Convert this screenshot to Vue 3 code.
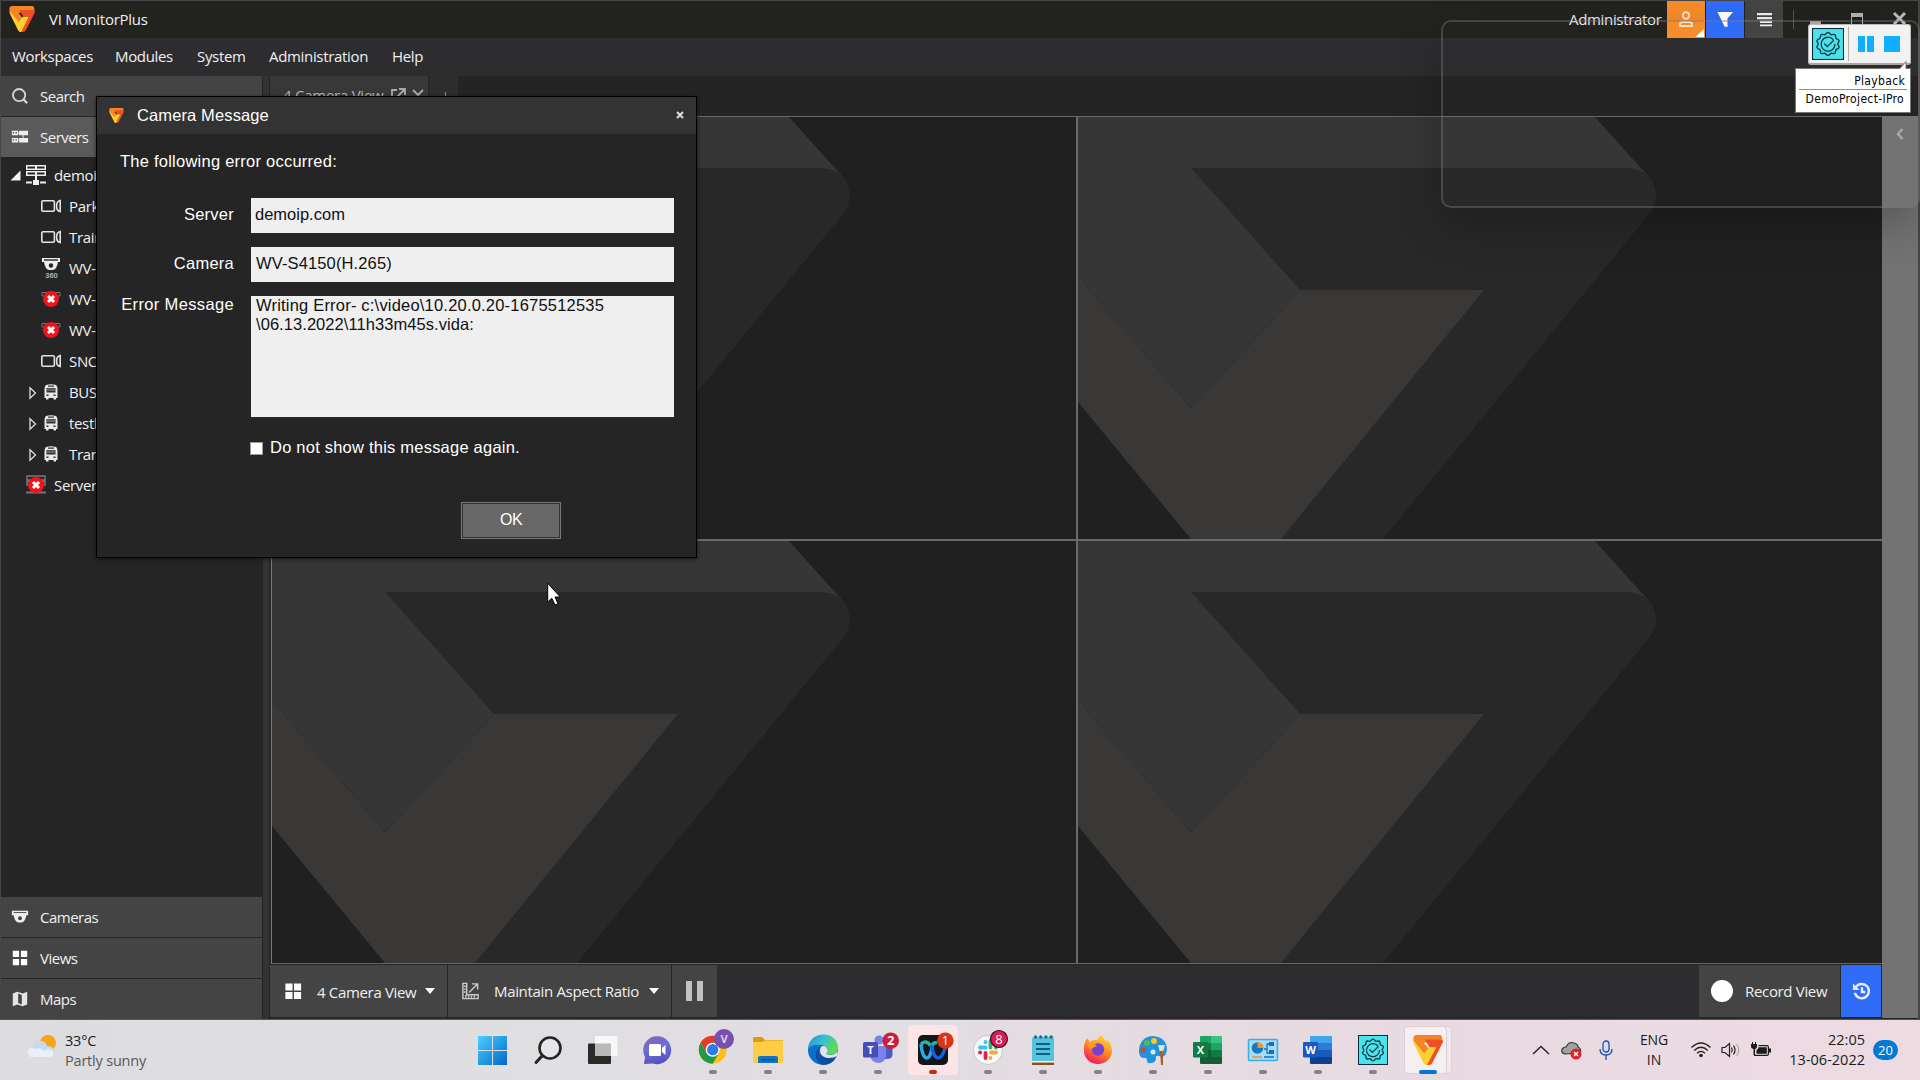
<script setup>
import { h } from 'vue'

const menu = ['Workspaces', 'Modules', 'System', 'Administration', 'Help']

const tree = [
  { icon: 'cam', label: 'Park' },
  { icon: 'cam', label: 'Train' },
  { icon: 'dome360', label: 'WV-' },
  { icon: 'fail', label: 'WV-' },
  { icon: 'fail', label: 'WV-' },
  { icon: 'cam', label: 'SNC' },
  { icon: 'bus', label: 'BUS', open: true },
  { icon: 'bus', label: 'testb', open: true },
  { icon: 'bus', label: 'Tran', open: true },
]

const sections = ['Cameras', 'Views', 'Maps']

const apps = [
  'windows', 'search', 'taskview', 'chat', 'chrome', 'explorer', 'edge', 'teams', 'webex',
  'slack', 'notepad', 'firefox', 'paint', 'excel', 'control', 'word', 'seal', 'vi',
]
const running = (i) => i > 3 && i < 17 && i !== 8

function ring(cx, cy, r, amp, lobes) {
  const pts = []
  for (let i = 0; i < 144; i++) {
    const a = (i / 144) * Math.PI * 2
    const rr = r + amp * Math.cos(lobes * a)
    pts.push(`${(cx + rr * Math.sin(a)).toFixed(2)} ${(cy - rr * Math.cos(a)).toFixed(2)}`)
  }
  return 'M' + pts.join('L') + 'Z'
}

const Logo = () =>
  h('svg', { viewBox: '0 0 30 30' }, [
    h('path', { fill: '#f58426', d: 'M3 0H27Q29 0 29.500 4.500L11 8L16 14L11 21L1 7Q-1 1 3 0Z' }),
    h('path', { fill: '#f04e23', d: 'M12 4.500H28Q31 4.500 29.500 8L19 28.500Q18 30 15 30H13.500L23 12.500H16.500Z' }),
    h('path', { fill: '#fdd02f', d: 'M.500 5.500L11 18.500L16 12.500H23L14 30H13Q11.500 30 10.500 28L1 9Z' }),
  ])

const Seal = () =>
  h('svg', { viewBox: '0 0 30 30' }, [
    h('path', { fill: '#0d2b3e', d: 'M0 0H30V30H0Z' }),
    h('path', { fill: '#4be3ea', d: 'M1 1H29V29H1Z' }),
    h('path', { fill: 'none', stroke: '#123a4c', 'stroke-width': 1.3, d: ring(15, 15, 10, 0.8, 10) }),
    h('path', { fill: 'none', stroke: '#123a4c', 'stroke-width': 1.2, d: 'M20 11A6.500 6.500 0 1 0 21.500 15M11.500 14.500L14.300 17.500L20.500 11.500' }),
  ])
</script>

<template>
  <div class="screen">
    <div class="window">
      <header class="titlebar">
        <Logo class="app-logo" />
        <span class="app-name">VI MonitorPlus</span>
        <span class="admin">Administrator</span>
        <div class="tbtn orange">
          <svg viewBox="0 0 38 37"><g fill="none" stroke="#fde0c4" stroke-width="2"><circle cx="19" cy="14.500" r="3.200" /><path d="M13 25V23Q13 21 16 21H22Q25 21 25 23V25Z" /></g><path fill="#fff" d="M37 28V36H28.500Z" /></svg>
        </div>
        <div class="tbtn blue">
          <svg viewBox="0 0 38 37"><path fill="#fff" d="M11.500 11H27L21.500 17.500V26L18.500 25.500Z" /></svg>
        </div>
        <div class="tbtn grey">
          <svg viewBox="0 0 38 37"><path fill="#f0f0f0" d="M12 12H27V14.300H12ZM12 16H27V18.300H12ZM15 19.800H27V22H15ZM15 23.500H27V25.300H15Z" /></svg>
        </div>
        <svg class="wincontrols" viewBox="0 0 136 37"><path fill="#555" d="M9 9H10V28H9Z" /><path fill="#a8a8a8" d="M26 20H37V23H26Z" /><path fill="none" stroke="#b4b4b4" d="M67.500 13.500H78.500V24H67.500Z" /><path fill="#b4b4b4" d="M67 12H79V16H67Z" /><path stroke="#bcbcbc" stroke-width="3" d="M110 12L121 23M121 12L110 23" /></svg>
      </header>

      <nav class="menubar">
        <span v-for="m in menu" :key="m">{{ m }}</span>
      </nav>

      <div class="body">
        <aside class="sidebar">
          <div class="srow">
            <svg viewBox="0 0 20 20"><circle cx="9" cy="9" r="6.800" fill="none" stroke="#d4d4d4" stroke-width="2" /><path stroke="#d4d4d4" stroke-width="2.500" d="M13.500 13.500L18 18" /></svg>
            <span>Search</span>
          </div>
          <div class="srow active">
            <svg viewBox="0 0 20 20"><path fill="#eee" d="M1 3H8V8H1ZM9 3H19V8H9ZM1 11H8V16H1ZM9 11H19V16H9ZM8 5H9V6H8ZM8 13H9V14H8ZM13 8H14V11H13Z" /><path fill="#555" d="M2 4.500H3.500V6H2ZM5 4.500H6.500V6H5ZM2 12.500H3.500V14H2ZM5 12.500H6.500V14H5Z" /></svg>
            <span>Servers</span>
          </div>
          <div class="tree">
            <div class="trow root">
              <svg class="twist" viewBox="0 0 11 11"><path fill="#f2f2f2" d="M10.500 .5V10.500H.5Z" /></svg>
              <svg class="ticon" viewBox="0 0 20 20"><path fill="#eee" d="M0 0H20V5H0ZM0 6H20V11H0ZM9 11H11V15H9ZM0 16.500H20V18.500H0ZM7 15H13V20H7Z" /><path fill="#252525" d="M1.500 1.500H9V3.500H1.500ZM11 1.500H18.500V3.500H11ZM1.500 7.500H9V9.500H1.500ZM11 7.500H18.500V9.500H11ZM6 16H7V19H6ZM13 16H14V19H13Z" /></svg>
              <span>demoi</span>
            </div>
            <div v-for="(t, i) in tree" :key="i" class="trow">
              <svg class="twist" viewBox="0 0 11 14"><path v-if="t.open" fill="none" stroke="#ddd" stroke-width="1.300" d="M4 1.700L9.500 7L4 12.300Z" /></svg>
              <svg v-if="t.icon === 'cam'" class="ticon" viewBox="0 0 20 20"><g fill="none" stroke="#e4e4e4" stroke-width="1.600"><rect x=".8" y="4.700" width="12.600" height="10.600" rx="1.200" /><path d="M19.200 4.500V15.500C16 15 15.600 13 15.600 10S16 5 19.200 4.500Z" /></g></svg>
              <svg v-else-if="t.icon === 'dome360'" class="ticon" viewBox="0 0 20 20"><path fill="#eee" d="M1 0H19V4H17Q16 11 12 12H8Q4 11 3 4H1Z" /><path fill="#252525" d="M3 1.300H17V2.700H3Z" /><circle cx="10" cy="7.500" r="2.200" fill="#252525" /><text x="10.500" y="19.800" class="t360">360</text></svg>
              <svg v-else-if="t.icon === 'fail'" class="ticon" viewBox="0 0 20 20"><path fill="none" stroke="#777" d="M1 3.500H19V7H1Z" /><circle cx="10" cy="10" r="8" fill="#f5121c" /><path stroke="#fff" stroke-width="3" d="M7 7L13 13M13 7L7 13" /></svg>
              <svg v-else class="ticon" viewBox="0 0 20 20"><path fill="#e8e8e8" d="M5 3Q10 1.500 15 3Q16.500 4 16.500 8V16H15V17.500H12.500V16H7.500V17.500H5V16H3.500V8Q3.500 4 5 3Z" /><path fill="#333" d="M7 3.600H13V4.700H7ZM5.500 6H14.500V10.500H5.500ZM5.500 12.500H7.500V14H5.500ZM12.500 12.500H14.500V14H12.500Z" /><path fill="#666" d="M6 6.500H14V9H6Z" /></svg>
              <span>{{ t.label }}</span>
            </div>
            <div class="trow root">
              <i class="twist"></i>
              <svg class="ticon" viewBox="0 0 20 20"><path fill="none" stroke="#777" stroke-width="1.500" d="M1 1H19V5H1ZM1 6.500H19V10H1Z" /><path fill="#777" d="M0 16.500H20V18.500H0Z" /><circle cx="10" cy="10" r="8" fill="#f5121c" /><path stroke="#fff" stroke-width="3" d="M7 7L13 13M13 7L7 13" /></svg>
              <span>Server</span>
            </div>
          </div>
          <div v-for="s in sections" :key="s" class="srow low">
            <svg v-if="s === 'Cameras'" viewBox="0 0 20 20"><path fill="#eee" d="M1 3H19V8H17Q16 15 12 16H8Q4 15 3 8H1Z" /><path fill="#444" d="M3 4.500H17V5.500H3Z" /><circle cx="10" cy="11.500" r="2.200" fill="#444" /></svg>
            <svg v-else-if="s === 'Views'" viewBox="0 0 20 20"><path fill="#fff" d="M2 2H9V9H2ZM11 2H18V9H11ZM2 11H9V18H2ZM11 11H18V18H11Z" /></svg>
            <svg v-else viewBox="0 0 20 20"><path fill="#e4e4e4" d="M2 4L7 2L13 4L18 2V16L13 18L7 16L2 18Z" /><path fill="#444" d="M8 4L12 5.500V16L8 14.500Z" /></svg>
            <span>{{ s }}</span>
          </div>
        </aside>
        <div class="splitter"></div>

        <main class="main">
          <div class="tabs">
            <div class="tab">
              <span>4 Camera View</span>
              <svg viewBox="0 0 34 16"><path fill="none" stroke="#aaa" stroke-width="1.800" d="M6 2H1V15H13V10M8 1H14V7M14 1L6 9M22 2L32 12M32 2L22 12" /></svg>
            </div>
            <div class="tab add"><svg viewBox="0 0 9 9"><path stroke="#c98b4a" d="M4.500 0V9M0 4.500H9" /></svg></div>
          </div>
          <div class="work">
            <div class="stage">
              <div class="cams">
                <svg v-for="n in 4" :key="n" class="cam" viewBox="0 0 804 422" preserveAspectRatio="xMinYMin slice">
                  <path fill="#363636" d="M0 0H517L571 60L545 90L222 173L113 291L0 159Z" />
                  <path fill="#282828" d="M113 51H545C556 51 563 53 569 58C576 64 578 73 578 79Q578 88 572 96L305 422H203L406 173H222Z" />
                  <path fill="#3a3836" d="M0 159L113 291L222 173H406L203 422H113L0 285Z" />
                </svg>
              </div>
              <footer class="toolbar">
                <div class="tool t1">
                  <svg viewBox="0 0 20 20"><path fill="#fff" d="M1.500 2H9V9.500H1.500ZM10.500 2H18V9.500H10.500ZM1.500 11H9V18.500H1.500ZM10.500 11H18V18.500H10.500Z" /></svg>
                  <span>4 Camera View</span><i class="caret"></i>
                </div>
                <div class="tool t2">
                  <svg viewBox="0 0 20 20"><g fill="none" stroke="#ccc" stroke-width="1.500"><path d="M2 2H6V14H18V18H2Z" /><path d="M8.500 11.500L17 3M11.500 2.500H17.500V8.500M3 5H5M3 8H5M3 11H5M5 14V17M8 15V17M11 15V17M14 15V17" /></g></svg>
                  <span>Maintain Aspect Ratio</span><i class="caret"></i>
                </div>
                <div class="tool t3"><i></i><i></i></div>
                <div class="tool rec"><i></i><span>Record View</span></div>
                <div class="tool hist">
                  <svg viewBox="0 0 20 20"><path fill="none" stroke="#e8eeff" stroke-width="2.500" d="M4 6A7.500 7.500 0 1 1 3 12M10.500 6V11H14" /><path fill="#e8eeff" d="M1 2V9H8Z" /></svg>
                </div>
              </footer>
            </div>
            <div class="rail"><svg viewBox="0 0 8 12"><path fill="none" stroke="#a8a8a8" stroke-width="2.500" d="M6.500 1L2 6L6.500 11" /></svg></div>
          </div>
        </main>
      </div>
    </div>

    <div class="ghost"></div>

    <div class="recorder">
      <Seal class="rseal" />
      <i class="rsep"></i>
      <i class="rbar"></i><i class="rbar"></i>
      <i class="rstop"></i>
    </div>
    <div class="tip">
      <svg class="tail" viewBox="0 0 8 9"><path fill="#fff" d="M7 1V9H0Z" /><path fill="none" stroke="#777" d="M0 8L7 .500V8" /></svg>
      <div class="tip1">Playback</div>
      <div class="tip2">DemoProject-IPro</div>
    </div>

    <section class="dialog">
      <div class="dhead">
        <Logo class="dlogo" />
        <span>Camera Message</span>
        <svg class="dclose" viewBox="0 0 8 8"><path stroke="#ddd" stroke-width="2" d="M1 1L7 7M7 1L1 7" /></svg>
      </div>
      <p class="lead">The following error occurred:</p>
      <div class="field"><label>Server</label><div class="input in1">demoip.com</div></div>
      <div class="field f2"><label>Camera</label><div class="input">WV-S4150(H.265)</div></div>
      <div class="field f3"><label>Error Message</label><div class="input area"><div class="l1">Writing Error- c:\video\10.20.0.20-1675512535</div><div>\06.13.2022\11h33m45s.vida:</div></div></div>
      <div class="check"><i></i><span>Do not show this message again.</span></div>
      <div class="ok"><span>OK</span></div>
    </section>

    <svg class="cursor" viewBox="0 0 14 24"><path fill="#fff" stroke="#000" d="M.7 1.200V20L4.800 16.200L8 23L11 21.700L8 15H13.300Z" /></svg>

    <div class="taskbar">
      <div class="weather">
        <svg viewBox="0 0 32 32"><circle cx="21" cy="12" r="8" fill="#fba40f" /><path fill="#c4d9f2" d="M6 26A6 6 0 0 1 6 15Q8 9 14 10Q19 10 20 15Q28 15 28 21Q28 26 23 26Z" /><path fill="#e6effa" d="M4 26Q-1 23 1 19Q4 15 8 18Q13 15 17 20Q22 16 26 20Q29 26 22 26Z" /></svg>
        <div><div class="deg">33°C</div><div class="sky">Partly sunny</div></div>
      </div>
      <div class="apps">
        <div v-for="(a, i) in apps" :key="a" class="app" :class="a">
          <svg v-if="a === 'windows'" viewBox="0 0 55 60"><defs><linearGradient id="wg" x1="0" y1="0" x2="1" y2="1"><stop offset="0" stop-color="#4cd0ff" /><stop offset="1" stop-color="#0067cb" /></linearGradient></defs><path fill="url(#wg)" d="M13 16H27V30H13ZM28 16H42V30H28ZM13 31H27V45H13ZM28 31H42V45H28Z" /></svg>
          <svg v-else-if="a === 'search'" viewBox="0 0 55 60"><circle cx="30" cy="28" r="10.500" fill="#e6e6e8" stroke="#242424" stroke-width="2.600" /><path stroke="#242424" stroke-width="3" stroke-linecap="round" d="M22 36L16 42.500" /></svg>
          <svg v-else-if="a === 'taskview'" viewBox="0 0 55 60"><rect x="13" y="23.500" width="23" height="20.500" rx="1" fill="#2a2a28" /><rect x="20" y="16" width="22.500" height="20" rx="1" fill="#fafafa" opacity=".92" /><path fill="#b9b9b9" d="M20 23.500H36V36H20Z" /></svg>
          <svg v-else-if="a === 'chat'" viewBox="0 0 55 60"><defs><linearGradient id="cg" x1="0" y1="0" x2=".3" y2="1"><stop offset="0" stop-color="#8a5fb5" /><stop offset=".5" stop-color="#6d6fd2" /><stop offset="1" stop-color="#5653c4" /></linearGradient></defs><path fill="url(#cg)" d="M14 44L15 37A14 14 0 1 1 23 43.500Z" /><rect x="19" y="24" width="12" height="12" rx="1.500" fill="#fff" /><path fill="#fff" d="M32 28L35.500 25V35L32 32Z" /></svg>
          <svg v-else-if="a === 'chrome'" viewBox="0 0 55 60"><circle cx="27.700" cy="29.700" r="14" fill="#fcc018" /><path fill="#e33b2e" d="M15.600 22.700A14 14 0 0 1 39.800 22.700H27.700L21.600 33.200Z" /><path fill="#1f9a49" d="M15.600 22.700A14 14 0 0 0 27.700 43.700L33.800 33.200L21.600 33.200Z" /><circle cx="27.700" cy="29.700" r="7" fill="#fff" /><circle cx="27.700" cy="29.700" r="5.600" fill="#2b7de9" /><circle cx="39" cy="19" r="10" fill="#7750b0" /><text x="39" y="23" class="b" fill="#ddd0ee" font-size="11">V</text></svg>
          <svg v-else-if="a === 'explorer'" viewBox="0 0 55 60"><path fill="#dd9b0b" d="M13 18Q13 17 14 17H22L25 20H43V30H13Z" /><path fill="#ffcd45" d="M13 22H22L25 20.500H43V43H13Z" /><path fill="#1374c5" d="M18 43V38Q18 36 20 36H36Q38 36 38 38V43Z" /><path fill="#0b4d8f" d="M21 39H35V40.500H21Z" /></svg>
          <svg v-else-if="a === 'edge'" viewBox="0 0 55 60"><defs><linearGradient id="eg" x1="0" y1="0" x2="1" y2=".5"><stop offset="0" stop-color="#1a8fd8" /><stop offset=".5" stop-color="#35bfd6" /><stop offset="1" stop-color="#62dc4c" /></linearGradient></defs><circle cx="28" cy="30" r="15" fill="#0f6fc8" /><path fill="url(#eg)" d="M13 29C14 10 42 10 43 27C43 34 37 36 31 34C34 30 31 25 26 25C20 24 16 25 13 29Z" /><path fill="#0c4f9e" d="M25 27C21 34 27 41 41 37Q37 45 28 45C19 42 19 30 25 27Z" /><path fill="#e6e2ea" d="M26 27C23 32 27 38 34 38Q39 38 42 36L43 31Q38 37 31 34Q34 31 31 27Q28 25 26 27Z" /></svg>
          <svg v-else-if="a === 'teams'" viewBox="0 0 55 60"><circle cx="29" cy="20" r="4.500" fill="#7b83eb" /><path fill="#5059c9" d="M34 26H42.500V35Q42 39 37 39H34Z" /><path fill="#7b83eb" d="M20 26H36V36Q35 43 28.500 43T20 36Z" /><rect x="13" y="22" width="15" height="15.500" rx="1.500" fill="#464eb8" /><text x="20.500" y="34" class="b" font-size="11">T</text><circle cx="40.700" cy="20.700" r="8.300" fill="#cb1d3c" /><text x="40.700" y="25.200" class="b" font-size="13">2</text></svg>
          <svg v-else-if="a === 'webex'" viewBox="0 0 55 60"><rect x="3" y="5" width="50" height="50" rx="4" fill="#fce4e7" /><rect x="13" y="15" width="30" height="30" rx="5" fill="#141516" /><path fill="none" stroke="#2ba7e8" stroke-width="3.500" d="M16 24C17 34 19 38 22 38S27 30 27 26" /><path fill="none" stroke="#22b3a1" stroke-width="3.500" d="M27 26Q28 22 32 23M16 24Q21 19 26 26" /><path fill="none" stroke="#155fe8" stroke-width="3.500" d="M26 25C28 34 30 38 33 38S39 33 40 28" /><circle cx="40.300" cy="20.700" r="8.300" fill="#d2371c" /><text x="40.300" y="25" class="n" font-size="12.500">1</text></svg>
          <svg v-else-if="a === 'slack'" viewBox="0 0 55 60"><circle cx="28" cy="30" r="14.500" fill="#f8f8f8" stroke="#c8c6c8" /><g stroke-width="3.800" stroke-linecap="round"><path stroke="#36c5f0" d="M25.500 22V22.200M20 27.500H25.500" /><path stroke="#2eb67d" d="M30.500 21V27.500M36 27.500H35.800" /><path stroke="#ecb22e" d="M31 32.500H36M30.500 38V37.800" /><path stroke="#e01e5a" d="M25.500 33V38M20 32.500H20.200" /></g><circle cx="39" cy="19" r="8.500" fill="#dd1a51" stroke="#39101f" stroke-width="1.200" /><text x="39" y="23.600" class="n" font-size="13">8</text></svg>
          <svg v-else-if="a === 'notepad'" viewBox="0 0 55 60"><path fill="#8b5118" d="M17 42H39V45H17Z" /><path fill="#fff" d="M17 40H39V42.500H17Z" /><path fill="#56c3dc" d="M17 19Q17 17 19 17H37Q39 17 39 19V41H17Z" /><path fill="none" stroke="#0c5f80" stroke-width="1.800" d="M21 24H35M21 29H35M21 34H35" /><path fill="none" stroke="#14708e" stroke-width="3.400" stroke-linecap="round" stroke-dasharray="0 5.200" d="M20.500 17H37" /></svg>
          <svg v-else-if="a === 'firefox'" viewBox="0 0 55 60"><defs><linearGradient id="fg" x1=".8" y1="0" x2=".3" y2="1"><stop offset="0" stop-color="#ffe040" /><stop offset=".5" stop-color="#ff8a26" /><stop offset="1" stop-color="#f0145c" /></linearGradient></defs><path fill="url(#fg)" d="M14 31Q13 25 17 18L20 22Q23 19 27 20Q28 17 32 15Q33 19 36 21L38 20Q42 25 42 31A14 13 0 0 1 14 31Z" /><circle cx="28" cy="29.500" r="6.200" fill="#7a3fd4" /><path fill="#ff9b22" d="M17 23Q23 22 27 26Q23 27 22 29Q19 27 17 23Z" /></svg>
          <svg v-else-if="a === 'paint'" viewBox="0 0 55 60"><path fill="#2192dd" d="M14 31C14 22 20 16 28 16Q41 17 42 29Q41 39 34 36Q30 35 31 39Q30 43 26 43Q22 44 22 40Q22 37 18 38Q14 37 14 31Z" /><circle cx="22" cy="23" r="3" fill="#5aba46" /><circle cx="29" cy="21" r="3" fill="#ffc61a" /><circle cx="18" cy="30" r="2.500" fill="#d8452b" /><circle cx="28" cy="32" r="2.500" fill="#d9ecf8" /><path fill="#efdcc4" d="M33 25H40L38 32H35Z" /><path fill="#a5652a" d="M35 31H38V45H36Z" /></svg>
          <svg v-else-if="a === 'excel' || a === 'word'" viewBox="0 0 55 60">
            <template v-if="a === 'excel'"><path fill="#21a366" d="M20 17Q20 16 21 16H31V23H20Z" /><path fill="#33c481" d="M31 16H41Q42 16 42 17V23H31Z" /><path fill="#107c41" d="M20 23H31V30H20ZM31 30H42V37H31Z" /><path fill="#21a366" d="M31 23H42V30H31Z" /><path fill="#185c37" d="M20 30H31V37H42V43Q42 44 41 44H21Q20 44 20 43Z" /></template>
            <template v-else><path fill="#41a5ee" d="M20 17Q20 16 21 16H41Q42 16 42 17V23H20Z" /><path fill="#2b7cd3" d="M20 23H42V30H20Z" /><path fill="#185abd" d="M20 30H42V37H20Z" /><path fill="#103f91" d="M20 37H42V43Q42 44 41 44H21Q20 44 20 43Z" /></template>
            <rect x="13" y="22" width="15" height="15.500" rx="1.300" :fill="a === 'excel' ? '#107c41' : '#185abd'" /><text x="20.500" y="34" class="b" font-size="11">{{ a === 'excel' ? 'X' : 'W' }}</text>
          </svg>
          <svg v-else-if="a === 'control'" viewBox="0 0 55 60"><rect x="13.500" y="19.500" width="29" height="21" rx="1" fill="#a7dcf8" stroke="#38afe6" stroke-width="1.500" /><circle cx="22.500" cy="28" r="5.800" fill="#1479c2" /><path fill="#f79420" d="M22.500 28V22A6 6 0 0 1 28.500 28Z" /><path fill="none" stroke="#1670b5" stroke-width="1.300" d="M29 29H32V24H35M32 29V33H35" /><path fill="#1670b5" d="M34 22H39V26H34ZM34 30H39V34H34Z" /><path stroke="#f79420" stroke-width="1.500" d="M17 37H27" /><path stroke="#1670b5" stroke-width="1.500" d="M29 37H39" /></svg>
          <Seal v-else-if="a === 'seal'" class="glyph" />
          <template v-else><i class="vi-back"></i><i class="vi-front"></i><Logo class="glyph" /></template>
          <b v-if="running(i)" class="dot"></b>
          <b v-if="a === 'webex'" class="dot red"></b>
          <b v-if="a === 'vi'" class="dot wide"></b>
        </div>
      </div>
      <div class="tray">
        <svg class="chev" viewBox="0 0 18 10"><path fill="none" stroke="#222" stroke-width="1.400" d="M1 9L9 1.500L17 9" /></svg>
        <svg class="cloud" viewBox="0 0 22 20"><path fill="#a2a2a2" stroke="#333" stroke-width="1.200" d="M4 14Q0 13 1 9.500Q2 7 5 7Q8 1 13 3Q17 4 17 7Q21 9 19 13Z" /><circle cx="15" cy="14" r="5.500" fill="#d8232f" /><path stroke="#fff" stroke-width="1.300" d="M13 12L17 16M17 12L13 16" /></svg>
        <svg class="mic" viewBox="0 0 14 20"><rect x="4" y="1" width="6" height="11" rx="3" fill="#d9dcee" stroke="#1d55a8" stroke-width="1.300" /><path fill="none" stroke="#1d55a8" stroke-width="1.300" d="M1 9Q1 15 7 15T13 9M7 15V20" /></svg>
        <div class="lang"><div>ENG</div><div>IN</div></div>
        <svg class="wifi" viewBox="0 0 20 16"><g fill="none" stroke="#222" stroke-width="1.300"><path d="M.5 5.500Q10-3.500 19.500 5.500M3.200 8.500Q10 2 16.800 8.500M6 11.300Q10 7.500 14 11.300" /></g><circle cx="10" cy="13.500" r="1.800" fill="#222" /></svg>
        <svg class="vol" viewBox="0 0 20 16"><g fill="none" stroke="#222" stroke-width="1.200"><path d="M1 5.500H4L8.500 1.500V14.500L4 10.500H1Z" /><path d="M10.500 5.500Q12 8 10.500 10.500M12.500 3.500Q15.500 8 12.500 12.500" /><path stroke="#aaa" d="M15.500 2Q20 8 15.500 14" /></g></svg>
        <svg class="batt" viewBox="0 0 20 16"><path fill="#1c1c1c" d="M1 0H2V2H4V0H5V2H6V5Q6 6.500 4 7V13H2.500V7Q0 6.500 0 5V2H1Z" /><path fill="none" stroke="#1c1c1c" stroke-width="1.200" d="M7.500 3.600H16Q17.400 3.600 17.400 5V12Q17.400 13.400 16 13.400H3" /><path fill="#1c1c1c" d="M7.500 5.300H15.800V11.800H5.500V8Q7.500 7.500 7.500 5.300ZM18 6.500H20V10.500H18Z" /></svg>
        <div class="clock"><div>22:05</div><div>13-06-2022</div></div>
        <span class="count">20</span>
      </div>
    </div>
  </div>
</template>

<style>
body { margin: 0; background: #222; overflow: hidden; }
</style>

<style scoped>
.screen { position: relative; width: 1920px; height: 1080px; overflow: hidden; display: flex; flex-direction: column; font-family: "Open Sans", "Noto Sans", sans-serif; font-size: 15px; letter-spacing: -.33px; color: #f0f0f0; box-sizing: border-box; }
.screen * { box-sizing: border-box; }
svg { display: block; flex: none; }
i, b { display: block; flex: none; }
span { white-space: nowrap; }
.window { height: 1020px; border: 1px solid #464646; border-right-width: 2px; border-bottom: 1px solid #555; display: flex; flex-direction: column; background: #2d2d30; }
.titlebar { height: 37px; background: #22221f; display: flex; align-items: center; }
.app-logo { width: 28px; height: 26px; margin: 0 0 2px 7px; }
.app-name { margin-left: 13px; flex: 1; padding-bottom: 2px; letter-spacing: -.25px; }
.admin { margin-right: 7px; width: 91px; padding-bottom: 1px; }
.tbtn { width: 38px; height: 37px; margin-right: 1px; }
.orange { background: #f78c2b; }
.blue { background: #2f6cf8; }
.grey { background: #444; }
.wincontrols { width: 136px; height: 37px; margin-right: -2px; }
.menubar { height: 38px; background: #2d2d30; display: grid; grid-template-columns: 103px 82px 72px 123px 80px; padding: 0 0 2px 11px; align-items: center; }
.body { flex: 1; display: flex; min-height: 0; }
.sidebar { width: 261px; background: #252525; display: flex; flex-direction: column; }
.srow { height: 41px; background: #444; border-bottom: 1px solid #252525; display: flex; align-items: center; padding-left: 10px; letter-spacing: -.5px; }
.srow svg { width: 18px; height: 18px; margin-right: 11px; }
.srow span { padding-bottom: 1px; }
.srow.active { background: #5a5a5a; border: 0; height: 40px; }
.low:last-child { height: 40px; border: 0; }
.tree { flex: 1; padding-top: 3px; overflow: hidden; }
.trow { height: 31px; display: flex; align-items: center; padding-left: 25px; }
.trow span { padding-bottom: 2px; }
.trow.root { padding-left: 9px; }
.twist { width: 11px; height: 14px; margin-right: 4px; }
.root .twist { width: 11px; height: 11px; margin-right: 5px; }
.ticon { width: 20px; height: 20px; margin: 0 8px 1px 0; }
.t360 { font: bold 7.500px "Liberation Sans", sans-serif; fill: #b0b0b0; text-anchor: middle; letter-spacing: 0; }
.splitter { width: 8px; background: #333; border-left: 1px solid #252525; border-right: 1px solid #252525; }
.main { flex: 1; display: flex; flex-direction: column; min-width: 0; }
.tabs { height: 40px; background: #242424; display: flex; }
.tab { width: 159px; background: #383838; display: flex; align-items: center; padding-left: 13px; color: #b8b8b8; border-right: 1px solid #252525; }
.tab span { width: 107px; padding-bottom: 3px; letter-spacing: -.25px; }
.tab svg { width: 34px; height: 16px; margin-left: 1px; }
.tab.add { width: 30px; background: #2d2d2d; padding-left: 12px; }
.tab.add svg { width: 9px; height: 9px; margin: 1px 0 0; }
.work { flex: 1; display: flex; min-height: 0; }
.stage { width: 1612px; display: flex; flex-direction: column; }
.cams { height: 848px; border: 1px solid #666; border-left: 1px solid #777; margin-left: 1px; border-right: 0; display: grid; grid-template-columns: 804px 804px; grid-template-rows: 422px 422px; gap: 2px; background: #6a6a6a; }
.cam { width: 804px; height: 422px; background: #202020; }
.toolbar { height: 54px; border-top: 1px solid #252525; border-bottom: 1px solid #252525; display: flex; background: #2d2d30; }
.tool { background: #444; display: flex; align-items: center; border-right: 1px solid #262626; }
.t1 { width: 178px; padding-left: 14px; }
.t2 { width: 224px; padding-left: 13px; }
.tool svg { width: 19px; height: 22px; }
.t1 span { width: 100px; margin: 1px 8px 0 14px; }
.t2 span { width: 146px; margin: 0 9px 0 14px; }
.caret { border: 5px solid transparent; border-top: 6px solid #fff; border-bottom: 0; }
.t3 { width: 45px; padding-left: 14px; gap: 5px; border-right: 0; }
.t3 i { width: 6px; height: 20px; background: #c2c2c2; }
.rec { width: 142px; margin-left: auto; padding-left: 12px; }
.rec i { width: 22px; height: 22px; border-radius: 50%; background: #fff; margin-right: 12px; }
.hist { width: 41px; background: #2f6cf8; justify-content: center; }
.rail { flex: 1; background: #737373; border-bottom: 1px solid #252525; padding: 12px 0 0 14px; }
.rail svg { width: 8px; height: 12px; }

.ghost { position: absolute; left: 1441px; top: 20px; width: 479px; height: 188px; border: 2px solid rgba(120, 120, 120, .42); border-radius: 10px; box-shadow: 0 18px 44px rgba(0, 0, 0, .22); clip-path: inset(-60px 0 -110px -60px); }
.recorder { position: absolute; left: 1808px; top: 24px; width: 103px; height: 41px; background: #f2f2f2; border: 1px solid #bbb; border-bottom: 2px solid #aaa6a0; border-radius: 3px; display: flex; align-items: center; padding-left: 3px; }
.rseal { width: 32px; height: 32px; }
.rsep { width: 1px; height: 34px; background: #b5b0a8; margin: 0 9px 0 4px; }
.rbar { width: 7px; height: 16px; background: #0cb0ff; margin-right: 2px; }
.rstop { width: 16px; height: 16px; background: #0cb0ff; margin-left: 8px; }
.tip { position: absolute; left: 1795px; top: 68px; width: 116px; height: 45px; background: #fff; border: 1px solid #777; font: 12px "DejaVu Sans Condensed", "DejaVu Sans", sans-serif; letter-spacing: .33px; color: #000; text-align: right; padding: 4px 3px 0; }
.tail { position: absolute; right: 3px; top: -8px; width: 8px; height: 9px; }
.tip1 { height: 17px; line-height: 16px; border-bottom: 1px solid #8c8ca0; padding-right: 2px; }
.tip2 { line-height: 19px; padding-right: 3px; white-space: nowrap; }

.dialog { position: absolute; left: 96px; top: 96px; width: 601px; height: 462px; border: 1px solid #000; background: #252525; box-shadow: 0 1px 4px rgba(0, 0, 0, .6); font: 16.500px "Liberation Sans", Arial, sans-serif; letter-spacing: 0; color: #fff; display: flex; flex-direction: column; }
.dhead { height: 37px; background: #333; display: flex; align-items: center; padding: 0 12px 1px 11px; }
.dhead span { margin-left: 12px; flex: 1; letter-spacing: .12px; }
.dlogo { width: 17px; height: 15px; }
.dclose { width: 8px; height: 8px; }
.lead { margin: 18px 0 0 23px; height: 46px; line-height: 19px; letter-spacing: .24px; }
.field { height: 35px; display: flex; }
.field label { width: 137px; margin-right: 17px; text-align: right; padding-top: 7px; line-height: 19px; letter-spacing: .25px; }
.f2 { margin-top: 14px; }
.f3 { margin-top: 14px; height: 121px; }
.f3 label { padding-top: 0; margin-top: -1px; letter-spacing: .35px; }
.input { width: 423px; background: #efefef; color: #111; line-height: 19px; padding: 7px 0 0 5px; white-space: nowrap; letter-spacing: .13px; }
.input.in1 { padding-left: 4px; letter-spacing: 0; }
.input.area { padding-top: 0; }
.l1 { letter-spacing: .2px; }
.input.area { letter-spacing: .06px; }
.check { margin: 24px 0 0 153px; height: 14px; display: flex; align-items: center; }
.check i { width: 13px; height: 13px; background: #fff; border: 1px solid #999; margin-right: 7px; }
.check span { letter-spacing: .22px; padding-bottom: 2px; }
.ok { margin: 47px 0 0 364px; width: 100px; height: 37px; border: 1px solid #777; background: #333; padding: 1px; }
.ok span { display: flex; height: 33px; background: #686868; align-items: center; justify-content: center; font-size: 16px; padding-bottom: 1px; letter-spacing: -.6px; }
.cursor { position: absolute; left: 547px; top: 582px; width: 14px; height: 24px; }

.taskbar { height: 60px; background: linear-gradient(90deg, #dddddf 0, #dfdfe2 500px, #e3dde2 1000px, #e8dae1 1400px, #eddbe2 1920px); display: flex; color: #1c1c1c; }
.weather { width: 465px; display: flex; padding: 11px 0 0 27px; }
.weather svg { width: 32px; height: 32px; margin-right: 6px; }
.weather div div { line-height: 20px; font-size: 14.500px; letter-spacing: -.2px; }
.weather .sky { color: #595959; letter-spacing: -.2px; }
.apps { display: flex; width: 990px; }
.app { width: 55px; height: 60px; position: relative; }
.app > svg { width: 55px; height: 60px; }
.app > svg.glyph { position: absolute; left: 13px; top: 15px; width: 30px; height: 30px; }
.app text { text-anchor: middle; letter-spacing: 0; }
.app .b { font-family: "Open Sans", sans-serif; font-weight: bold; }
.app .b:not([fill]), .app .n { fill: #fff; }
.dot { position: absolute; left: 24px; top: 50px; width: 8px; height: 4px; border-radius: 2px; background: #858285; }
.dot.red { background: #c42b1c; }
.dot.wide { left: 19px; width: 18px; background: #0078d4; }
.vi-back, .vi-front { position: absolute; left: 4px; top: 6px; width: 48px; height: 48px; border-radius: 4px; background: #f2e8ed; border: 1px solid #dccfd6; }
.vi-front { width: 43px; background: #f5eff2; }
.tray { flex: 1; display: flex; align-items: center; padding-left: 77px; }
.chev { width: 18px; height: 10px; }
.cloud { width: 22px; height: 20px; margin-left: 11px; }
.mic { width: 14px; height: 20px; margin-left: 16px; }
.lang { width: 40px; margin-left: 21px; text-align: center; font-size: 14px; line-height: 20px; letter-spacing: -.1px; }
.wifi { width: 20px; height: 16px; margin-left: 17px; }
.vol { width: 20px; height: 16px; margin-left: 10px; }
.batt { width: 20px; height: 16px; margin-left: 10px; }
.clock { width: 94px; text-align: right; font-size: 14.500px; line-height: 20px; letter-spacing: 0; }
.count { width: 25px; height: 20px; border-radius: 10px; background: #0078d4; color: #fff; font-size: 13px; line-height: 20px; text-align: center; margin-left: 8px; letter-spacing: 0; }
</style>
